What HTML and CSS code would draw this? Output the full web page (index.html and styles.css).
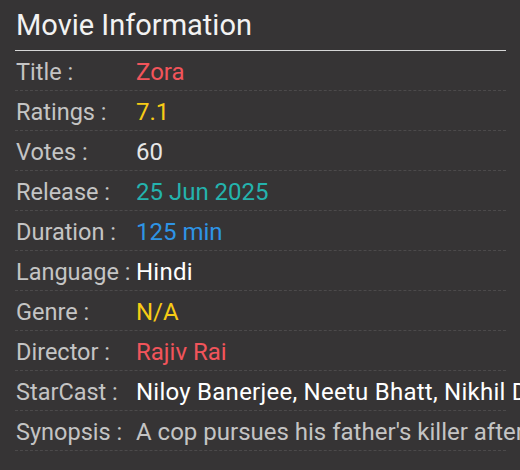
FILE: index.html
```html
<!DOCTYPE html>
<html>
<head>
<meta charset="utf-8">
<link rel="stylesheet" href="styles.css">
</head>
<body>
<div class="panel">
  <h2 class="heading">Movie Information</h2>
  <div class="rows">
    <div class="row"><span class="label">Title :</span><span class="value red">Zora</span></div>
    <div class="row"><span class="label">Ratings :</span><span class="value yellow">7.1</span></div>
    <div class="row"><span class="label">Votes :</span><span class="value light">60</span></div>
    <div class="row"><span class="label">Release :</span><span class="value teal">25 Jun 2025</span></div>
    <div class="row"><span class="label">Duration :</span><span class="value blue">125 min</span></div>
    <div class="row"><span class="label">Language :</span><span class="value white">Hindi</span></div>
    <div class="row"><span class="label">Genre :</span><span class="value yellow">N/A</span></div>
    <div class="row"><span class="label">Director :</span><span class="value red">Rajiv Rai</span></div>
    <div class="row"><span class="label">StarCast :</span><span class="value white">Niloy Banerjee, Neetu Bhatt, Nikhil Dwivedi, Shilpa Shukla</span></div>
    <div class="row"><span class="label">Synopsis :</span><span class="value gray">A cop pursues his father's killer after the murderer escapes from prison.</span></div>
  </div>
</div>
</body>
</html>
```

FILE: styles.css
```css
html, body {
  margin: 0;
  padding: 0;
  background: #363435;
  overflow: hidden;
}
body {
  font-family: Roboto, "Noto Sans", sans-serif;
}
.panel {
  width: 491px;
  margin-left: 15px;
}
.heading {
  margin: 0;
  padding-top: 7px;
  padding-left: 1px;
  height: 51px;
  box-sizing: border-box;
  font-weight: 400;
  font-size: 29px;
  line-height: 36px;
  color: #f2f2f2;
  border-bottom: 1px solid #d6d6d6;
}
.rows {
  display: flex;
  flex-direction: column;
}
.row {
  display: flex;
  align-items: center;
  height: 40px;
  box-sizing: border-box;
  padding-top: 3px;
  border-bottom: 1px dashed #4c4a4b;
  white-space: nowrap;
  font-size: 23.5px;
  line-height: 28px;
}
.label {
  flex: 0 0 121px;
  padding-left: 1px;
  box-sizing: border-box;
  color: #c4c4c4;
}
.value {
  font-size: 24px;
  color: #eeeeee;
}
.red { color: #f2545b; }
.yellow { color: #f7cb15; }
.light { color: #e6e6e6; }
.teal { color: #24b3ad; }
.blue { color: #2e94e6; }
.white { color: #ffffff; letter-spacing: 0.25px; }
.gray { color: #c4c4c4; }
```
